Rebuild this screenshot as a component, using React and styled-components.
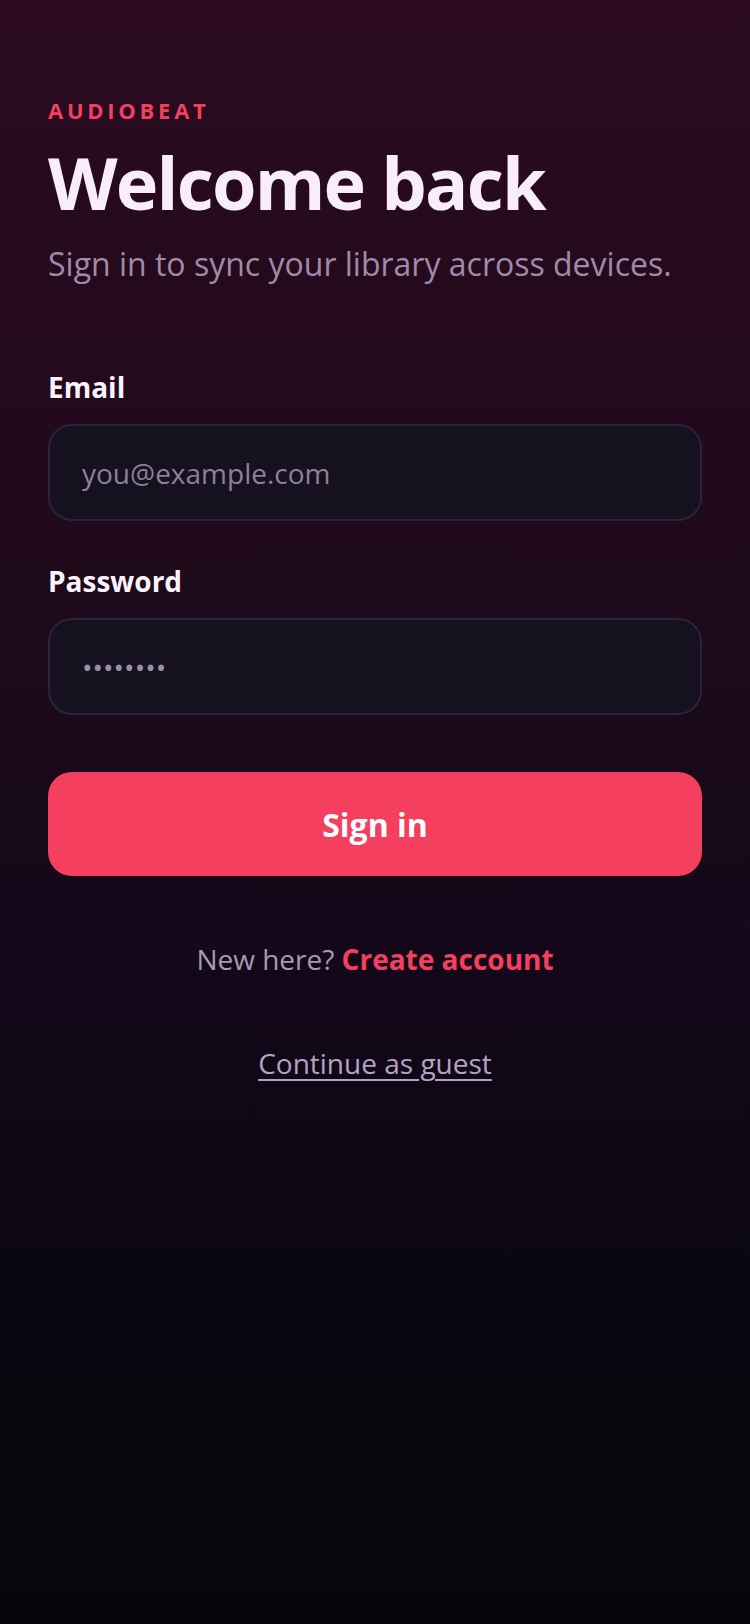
import React, { useState } from 'react';
import styled, { createGlobalStyle } from 'styled-components';

const GlobalStyle = createGlobalStyle`
  * { box-sizing: border-box; }
  html, body {
    margin: 0;
    padding: 0;
    background: #07050b;
  }
  body {
    font-family: "Open Sans", "Noto Sans", sans-serif;
    -webkit-font-smoothing: antialiased;
  }
`;

export default function App() {
    const [email, setEmail] = useState("");
    const [password, setPassword] = useState("password");

    const handleSubmit = (e) => {
        e.preventDefault();
    };

    return (
        <>
            <GlobalStyle />
            <Screen>
                <Brand>AUDIOBEAT</Brand>
                <Title>Welcome back</Title>
                <Subtitle>Sign in to sync your library across devices.</Subtitle>

                <Form onSubmit={handleSubmit}>
                    <Field>
                        <Label htmlFor="email">Email</Label>
                        <Input
                            id="email"
                            type="email"
                            placeholder="you@example.com"
                            value={email}
                            onChange={(e) => setEmail(e.target.value)}
                        />
                    </Field>
                    <Field>
                        <Label htmlFor="password">Password</Label>
                        <Input
                            id="password"
                            type="password"
                            value={password}
                            onChange={(e) => setPassword(e.target.value)}
                        />
                    </Field>
                    <SubmitButton type="submit">Sign in</SubmitButton>
                </Form>

                <Prompt>
                    New here? <AccentLink href="#">Create account</AccentLink>
                </Prompt>
                <GuestLink href="#">Continue as guest</GuestLink>
            </Screen>
        </>
    );
}

const Screen = styled.main`
    min-height: 1624px;
    display: flex;
    flex-direction: column;
    padding: 99px 48px 0;
    background: linear-gradient(180deg, #2b0a20 0%, #1f0a1a 35%, #13081a 60%, #0a0710 80%, #07050b 100%);
`;

const Brand = styled.div`
    font-size: 22px;
    line-height: 22px;
    font-weight: 700;
    letter-spacing: 0.17em;
    color: #f43f5e;
`;

const Title = styled.h1`
    margin: 21px 0 0;
    font-size: 72px;
    line-height: 80px;
    font-weight: 700;
    letter-spacing: -0.025em;
    color: #f7eefa;
`;

const Subtitle = styled.p`
    margin: 21px 0 0;
    font-size: 32px;
    line-height: 42px;
    color: #a08aa9;
`;

const Form = styled.form`
    display: flex;
    flex-direction: column;
    margin-top: 86px;
`;

const Field = styled.div`
    display: flex;
    flex-direction: column;
    gap: 20px;
    margin-bottom: 44px;
`;

const Label = styled.label`
    font-size: 28px;
    line-height: 33px;
    font-weight: 700;
    color: #fbf3fb;
`;

const Input = styled.input`
    height: 97px;
    width: 100%;
    padding: 0 32px;
    border-radius: 24px;
    border: 2px solid #2a2240;
    background: #15111f;
    color: #9a8eaa;
    font-family: inherit;
    font-size: 28px;
    outline: none;

    &::placeholder {
        color: #8c809c;
    }
    &:focus {
        border-color: #f43f5e;
    }
`;

const SubmitButton = styled.button`
    margin-top: 13px;
    height: 104px;
    border: none;
    border-radius: 24px;
    background: #f43f5e;
    color: #ffffff;
    font-family: inherit;
    font-size: 32px;
    font-weight: 700;
    cursor: pointer;
`;

const Prompt = styled.p`
    margin: 63px 0 0;
    text-align: center;
    font-size: 28px;
    line-height: 40px;
    color: #a898b4;
`;

const AccentLink = styled.a`
    color: #f43f5e;
    font-weight: 700;
    text-decoration: none;
`;

const GuestLink = styled.a`
    align-self: center;
    margin-top: 64px;
    font-size: 28px;
    line-height: 40px;
    color: #b3a3c2;
    text-decoration: underline;
    text-underline-offset: 5px;
`;
